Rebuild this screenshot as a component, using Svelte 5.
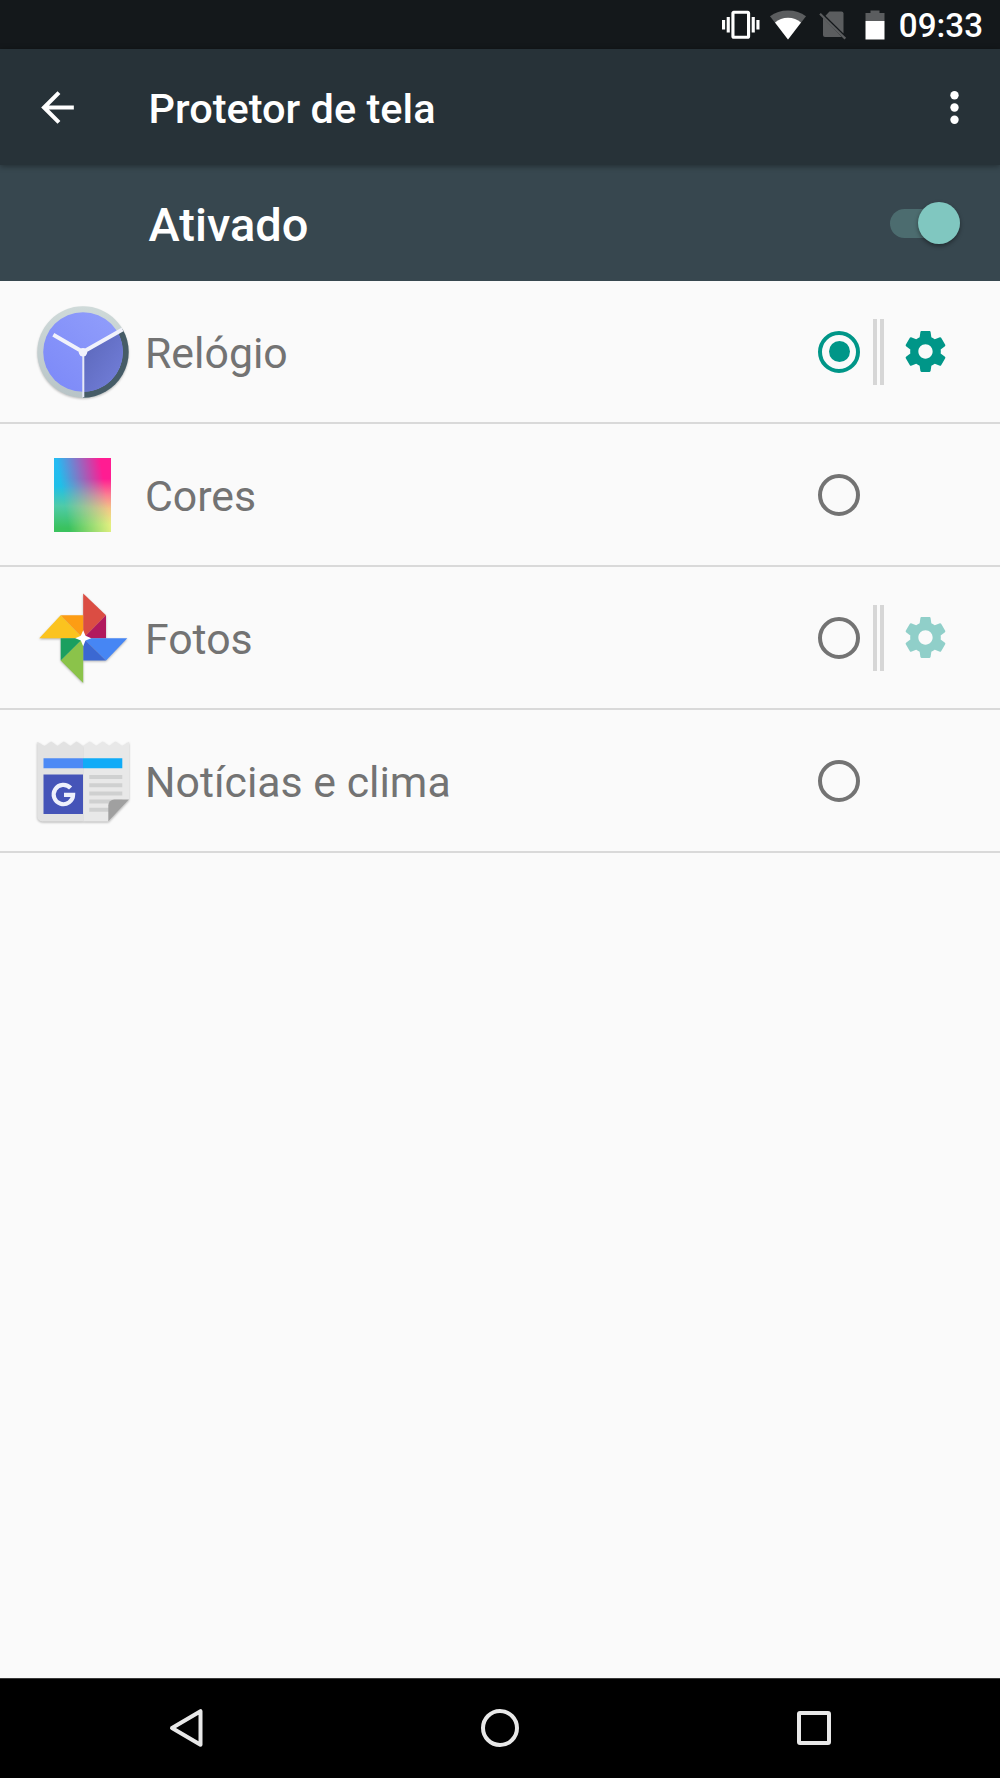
<script lang="ts">
  interface Saver {
    id: string;
    label: string;
    configurable: boolean;
  }

  const savers: Saver[] = [
    { id: "clock", label: "Relógio", configurable: true },
    { id: "colors", label: "Cores", configurable: false },
    { id: "photos", label: "Fotos", configurable: true },
    { id: "news", label: "Notícias e clima", configurable: false },
  ];

  let selected = $state("clock");
  let enabled = $state(true);
</script>

<div class="screen">
  <div class="status-bar">
    <svg class="vibrate" viewBox="0 0 24 24">
      <path
        d="M0 15h2V9H0v6zm3 2h2V7H3v10zm19-8v6h2V9h-2zm-3 8h2V7h-2v10zM16.5 3h-9C6.67 3 6 3.67 6 4.5v15c0 .83.67 1.5 1.5 1.5h9c.83 0 1.5-.67 1.5-1.5v-15c0-.83-.67-1.5-1.5-1.5zM16 19H8V5h8v14z"
      />
    </svg>
    <svg class="wifi" viewBox="0 0 38 30">
      <path class="dim" d="M19 29.5L1 6.2C6 2.4 12 .5 19 .5s13 1.9 18 5.7z" />
      <path d="M19 29.5L6 12.6C9.5 9.5 14 7.8 19 7.8s9.5 1.7 13 4.8z" />
    </svg>
    <svg class="sim" viewBox="0 0 28 30">
      <path class="dim" d="M10.5 1.5h12a2 2 0 0 1 2 2v20L6.5 5.800z" />
      <path class="dim" d="M4 7.5L22.800 27H6a2 2 0 0 1-2-2z" />
      <path class="slash" d="M1 3.800L26.300 28.600" />
    </svg>
    <svg class="battery" viewBox="0 0 20 30">
      <path class="dim" d="M5.5 .5h9V3h5v8H.5V3h5z" />
      <path d="M.5 11h19v18.5H.5z" />
    </svg>
    <span class="time">09:33</span>
  </div>

  <header class="app-bar">
    <button class="icon-button" aria-label="Voltar">
      <svg viewBox="0 0 24 24">
        <path d="M20 11H7.830l5.590-5.590L12 4l-8 8 8 8 1.410-1.410L7.830 13H20v-2z" />
      </svg>
    </button>
    <h1>Protetor de tela</h1>
    <button class="icon-button" aria-label="Mais opções">
      <svg viewBox="0 0 24 24">
        <circle cx="12" cy="6" r="2.050" />
        <circle cx="12" cy="12" r="2.050" />
        <circle cx="12" cy="18" r="2.050" />
      </svg>
    </button>
  </header>

  <div class="switch-bar">
    <span>Ativado</span>
    <button
      class="toggle"
      class:on={enabled}
      aria-label="Protetor de tela"
      onclick={() => (enabled = !enabled)}
    >
      <span class="thumb"></span>
    </button>
  </div>

  <ul class="savers">
    {#each savers as saver (saver.id)}
      <li>
        <div class="app-icon">
          {#if saver.id === "clock"}
            <svg viewBox="0 0 98 98">
              <defs>
                <linearGradient id="wedge" x1="0" y1="0" x2="1" y2="1">
                  <stop offset="0" stop-color="#5a66b8" />
                  <stop offset="1" stop-color="#7480dc" />
                </linearGradient>
                <linearGradient id="ring" x1="0" y1="0" x2="0" y2="1">
                  <stop offset="0" stop-color="#cfdad9" />
                  <stop offset="1" stop-color="#b8c4c7" />
                </linearGradient>
                <linearGradient id="face" x1="0" y1="1" x2="1" y2="0">
                  <stop offset="0" stop-color="#7b88f8" />
                  <stop offset="1" stop-color="#929ffb" />
                </linearGradient>
              </defs>
              <circle class="shadow" cx="49" cy="50.300" r="45.500" />
              <circle cx="49" cy="49" r="45.700" fill="url(#ring)" />
              <path d="M49 49L88.600 26.200A45.700 45.700 0 0 1 49 94.700z" fill="#465c67" />
              <circle cx="49" cy="49" r="39.800" fill="url(#face)" />
              <path d="M49 49L83.500 29.100A39.800 39.800 0 0 1 49 88.800z" fill="url(#wedge)" />
              <path d="M49.300 49V94.300" stroke="#e8eaf6" stroke-width="2" />
              <path d="M19.300 31.800L49 49L88.500 26.600" fill="none" stroke="#f1f2fb" stroke-width="4" />
              <circle cx="49" cy="49.300" r="4.200" fill="#f1f2fb" />
            </svg>
          {:else if saver.id === "colors"}
            <div class="swatch"></div>
          {:else if saver.id === "photos"}
            <svg class="pinwheel" viewBox="0 0 98 98">
              <path fill="#db4d43" d="M49.200 4.500L72 26.200L49.200 49.200z" />
              <path fill="#b1195d" d="M72 26.200V49.200H49.200z" />
              <path fill="#fbc31f" d="M5.300 49.200L26.700 26.200L49.200 49.200z" />
              <path fill="#fd9d14" d="M26.700 26.200H49.200V49.200z" />
              <path fill="#4686f4" d="M93.300 49.200L72 71.600L49.200 49.200z" />
              <path fill="#3b68d2" d="M72 71.600H49.200V49.200z" />
              <path fill="#8bc34a" d="M49.200 94L26.700 71.600L49.200 49.200z" />
              <path fill="#1b9f5f" d="M26.700 71.600V49.200H49.200z" />
              <path
                fill="#fff"
                d="M49.200 41.300L51.500 46.800L57.300 49.200L51.500 51.500L49.200 57.300L46.800 51.500L41.300 49.200L46.800 46.800z"
              />
            </svg>
          {:else}
            <svg class="paper" viewBox="0 0 98 98">
              <path
                fill="#e2e2e2"
                d="M3.300 9.800L10.500 14.300L17.200 9.500L23.500 14.300L29.800 9.500L36.500 14.300L42.500 9.500L49.200 14.300V89.500H8.300a5 5 0 0 1-5-5z"
              />
              <path
                fill="#e8e8e8"
                d="M49.200 14.300L55.800 9.500L62.200 14.300L68.800 9.500L75.200 14.300L81.500 9.500L88.200 14.300L95 9.800V67.500L74.500 89.500H49.200z"
              />
              <path fill="#4d8af5" d="M9.500 26.200H49V36.200H9.500z" />
              <path fill="#10abf7" d="M49 26.200H88.300V36.200H49z" />
              <path fill="#4554b8" d="M9.500 42.500H49V82H9.500z" />
              <path
                fill="#cfd0d0"
                d="M55.300 43h33v4h-33zM55.300 51.200h33v4h-33zM55.300 59.400h33v4h-33zM55.300 67.500h33v4h-33zM55.300 75.800h20v4h-20z"
              />
              <path fill="#a0a0a0" d="M74.300 89.500V73.500a6 6 0 0 1 6-6H95z" />
              <path
                fill="none"
                stroke="#eef0fc"
                stroke-width="4.200"
                d="M36.600 56A9.700 9.700 0 1 0 39.100 62.800H30"
              />
            </svg>
          {/if}
        </div>
        <span class="label">{saver.label}</span>
        <button
          class="radio"
          class:checked={selected === saver.id}
          aria-label={saver.label}
          onclick={() => (selected = saver.id)}
        ></button>
        {#if saver.configurable}
          <div class="divider"></div>
          <button
            class="settings"
            disabled={selected !== saver.id}
            aria-label="Configurações"
          >
            <svg viewBox="0 0 24 24">
              <path
                d="M19.430 12.980c.04-.32.07-.64.07-.98s-.03-.66-.07-.98l2.110-1.650c.19-.15.24-.42.12-.64l-2-3.460c-.12-.22-.39-.3-.61-.22l-2.490 1c-.52-.4-1.080-.73-1.690-.98l-.38-2.650C14.460 2.180 14.250 2 14 2h-4c-.25 0-.46.18-.49.42l-.38 2.650c-.61.25-1.170.59-1.690.98l-2.490-1c-.23-.09-.49 0-.61.22l-2 3.460c-.13.22-.07.49.12.64l2.110 1.650c-.04.32-.07.65-.07.98s.03.66.07.98l-2.110 1.650c-.19.15-.24.42-.12.64l2 3.460c.12.22.39.3.61.22l2.490-1c.52.4 1.080.73 1.690.98l.38 2.650c.03.24.24.42.49.42h4c.25 0 .46-.18.49-.42l.38-2.650c.61-.25 1.170-.59 1.690-.98l2.490 1c.23.09.49 0 .61-.22l2-3.460c.12-.22.07-.49-.12-.64l-2.110-1.650zM12 15.500c-1.930 0-3.500-1.570-3.500-3.500s1.570-3.500 3.500-3.500 3.500 1.570 3.500 3.500-1.570 3.500-3.500 3.500z"
              />
            </svg>
          </button>
        {/if}
      </li>
    {/each}
  </ul>

  <nav class="nav-bar">
    <svg viewBox="0 0 48 48"><path d="M10 24L38.500 7.200V40.800z" /></svg>
    <svg viewBox="0 0 48 48"><circle cx="24" cy="24" r="17" /></svg>
    <svg viewBox="0 0 48 48"><rect x="9" y="9" width="30" height="30" rx="1" /></svg>
  </nav>
</div>

<style>
  :global(body) {
    margin: 0;
    background: #fafafa;
  }
  .screen {
    display: flex;
    flex-direction: column;
    width: 1000px;
    height: 1778px;
    font-family: Roboto, sans-serif;
    background: #fafafa;
    overflow: hidden;
  }
  svg {
    display: block;
    flex: none;
  }
  button {
    flex: none;
    padding: 0;
    border: none;
    background: none;
    cursor: pointer;
  }
  .status-bar {
    display: flex;
    align-items: center;
    justify-content: flex-end;
    height: 49px;
    padding-right: 17px;
    box-sizing: border-box;
    background: #14181b;
    color: #fff;
    fill: #fff;
  }
  .status-bar .dim {
    fill: #5b5d5f;
  }
  .vibrate {
    width: 37.5px;
    height: 37.5px;
    margin-right: 9.5px;
  }
  .wifi {
    width: 38px;
    height: 30px;
    margin-right: 11.5px;
  }
  .sim {
    width: 28px;
    height: 30px;
    margin-right: 18px;
  }
  .slash {
    stroke: #5b5d5f;
    stroke-width: 2.2;
  }
  .battery {
    width: 20px;
    height: 30px;
    margin-right: 14px;
  }
  .time {
    font-size: 33.2px;
    font-weight: 500;
    line-height: 49px;
    padding-top: 2px;
  }
  .app-bar {
    display: flex;
    align-items: center;
    flex: none;
    height: 116px;
    padding: 0 21px 0 33px;
    box-sizing: border-box;
    background: #273238;
    box-shadow: 0 1px 6px rgba(0, 0, 0, 0.4);
    z-index: 1;
  }
  .icon-button svg {
    width: 49px;
    height: 49px;
    fill: #fff;
  }
  h1 {
    flex: 1;
    margin: 2px 0 0 66.5px;
    font-size: 41.5px;
    font-weight: 500;
    color: #fff;
  }
  .switch-bar {
    display: flex;
    align-items: center;
    justify-content: space-between;
    flex: none;
    height: 116px;
    padding: 0 40px 0 148.5px;
    box-sizing: border-box;
    background: #37474f;
    color: #fff;
    font-size: 47px;
    font-weight: 500;
  }
  .switch-bar > span {
    padding-top: 2px;
  }
  .toggle {
    display: flex;
    align-items: center;
    width: 70px;
    height: 29px;
    border-radius: 15px;
    background: #5b6a70;
  }
  .toggle.on {
    justify-content: flex-end;
    background: #4c6c6f;
  }
  .thumb {
    flex: none;
    width: 42px;
    height: 42px;
    border-radius: 50%;
    background: #bdbdbd;
    box-shadow: 0 2px 4px rgba(0, 0, 0, 0.4);
  }
  .on .thumb {
    background: #80c7c0;
  }
  .savers {
    flex: 1;
    margin: 0;
    padding: 0;
    list-style: none;
  }
  li {
    display: flex;
    align-items: center;
    height: 143px;
    padding-left: 33.5px;
    box-sizing: border-box;
    border-bottom: 2px solid #d9d9d9;
  }
  .app-icon {
    display: flex;
    align-items: center;
    justify-content: center;
    flex: none;
    width: 98px;
    height: 98px;
  }
  .app-icon svg {
    width: 98px;
    height: 98px;
  }
  .shadow {
    fill: rgba(0, 0, 0, 0.25);
    filter: blur(1px);
  }
  .pinwheel,
  .paper {
    filter: drop-shadow(0 1.5px 1px rgba(0, 0, 0, 0.28));
  }
  .swatch {
    display: grid;
    width: 57px;
    height: 74px;
    background: linear-gradient(#25bbf2 10%, #20bfe8 38%, #4fcba8 65%, #3ac25e 95%);
  }
  .swatch::after {
    content: "";
    background: linear-gradient(#ff1c92 28%, #fb7f92 50%, #f3c486 68%, #e6f080 90%);
    mask-image: linear-gradient(80deg, transparent 22%, #000 84%);
  }
  .label {
    flex: 1;
    margin: 3px 0 0 13.5px;
    font-size: 42.8px;
    color: #737373;
  }
  .radio {
    display: flex;
    align-items: center;
    justify-content: center;
    width: 42px;
    height: 42px;
    margin-right: 140px;
    border: 4px solid #737373;
    border-radius: 50%;
    box-sizing: border-box;
  }
  .radio.checked {
    border-color: #009688;
  }
  .radio.checked::before {
    content: "";
    width: 21px;
    height: 21px;
    border-radius: 50%;
    background: #009688;
  }
  .radio:has(+ .divider) {
    margin-right: 13px;
  }
  .divider {
    width: 3px;
    height: 66px;
    border: solid #d6d6d6;
    border-width: 0 4px;
  }
  .settings {
    margin: 0 50.5px 0 16.5px;
  }
  .settings svg {
    width: 49px;
    height: 49px;
    fill: #009688;
  }
  .settings:disabled {
    opacity: 0.42;
  }
  .nav-bar {
    display: grid;
    grid-template-columns: repeat(3, 314px);
    place-content: center;
    place-items: center;
    flex: none;
    height: 100px;
    padding-bottom: 1px;
    box-sizing: border-box;
    border-top: 1px solid #3a3a3a;
    background: #000;
  }
  .nav-bar svg {
    width: 48px;
    height: 48px;
    fill: none;
    stroke: #e8e8e8;
    stroke-width: 4;
    stroke-linejoin: round;
  }
</style>
